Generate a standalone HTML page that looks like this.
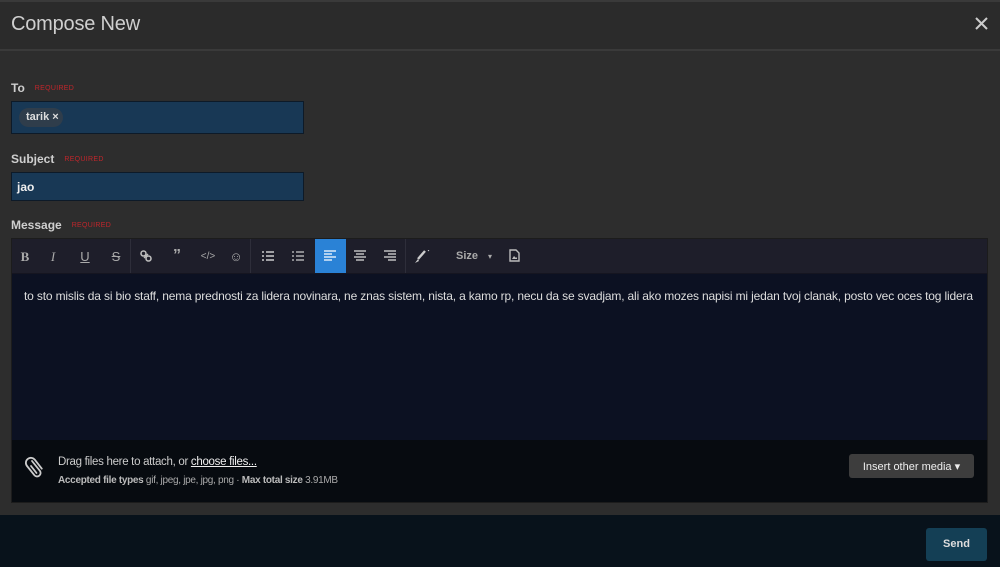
<!DOCTYPE html>
<html><head><meta charset="utf-8"><style>
*{box-sizing:border-box;margin:0;padding:0}
body{width:1000px;height:567px;background:#2d2d2d;font-family:"Liberation Sans",sans-serif;color:#ddd;position:relative;overflow:hidden}
.hdr{position:absolute;left:0;top:0;width:1000px;height:51px;background:#2b2b2b;border-top:2px solid #3a3a3a;border-bottom:2px solid #3a3a3a}
.hdr h1{position:absolute;left:11px;top:11px;font-size:20px;font-weight:normal;color:#cfcfcf;letter-spacing:-.2px}
.x{position:absolute;left:975px;top:15px}
.lbl{position:absolute;left:11px;font-size:12px;font-weight:bold;color:#cfcfcf}
.req{font-size:7px;color:#c0262b;font-weight:normal;margin-left:10px;vertical-align:2px;letter-spacing:.3px}
.inp{position:absolute;left:11px;width:293px;background:#183855;border:1px solid #0d1a28}
.chip{position:absolute;left:7px;top:6px;height:19px;width:44px;border-radius:10px;background:#2f3d4b;font-size:11px;font-weight:bold;color:#ddd;padding:3px 0 0 7px}
.ed{position:absolute;left:11px;top:238px;width:977px;height:265px;border:1px solid #1c1c1c}
.tb{position:absolute;left:0;top:0;width:975px;height:35px;background:#1e1e2a;border-bottom:1px solid #151520}
.tb span{position:absolute;top:10px;font-size:13px;color:#aaa;text-align:center;width:20px}
.tb svg{position:absolute;top:11px}
.sep{position:absolute;top:0;width:1px;height:34px;background:#2e2e3a}
.act{position:absolute;left:303px;top:0;width:31px;height:34px;background:#2a82d6}
.ct{position:absolute;left:0;top:35px;width:975px;height:166px;background:#0c1122}
.msg{position:absolute;left:12px;top:15px;font-size:12px;color:#ddd;white-space:nowrap;letter-spacing:-.16px}
.att{position:absolute;left:0;top:201px;width:975px;height:62px;background:#070b10}
.btn{position:absolute;left:837px;top:14px;width:125px;height:24px;background:#3d3d3d;border-radius:3px;font-size:11px;color:#eee;padding-top:6px;text-align:center}
.ftr{position:absolute;left:0;top:515px;width:1000px;height:52px;background:#08121b}
.send{position:absolute;left:926px;top:528px;width:61px;height:33px;background:#143f55;border-radius:3px;font-size:11px;font-weight:bold;color:#ddd;text-align:center;padding-top:10px}
</style></head><body>
<div class="hdr"><h1>Compose New</h1><svg class="x" width="13" height="13" viewBox="0 0 13 13"><path d="M1 1L12 12M12 1L1 12" stroke="#ccc" stroke-width="2"/></svg></div>
<div class="lbl" style="top:81px">To<span class="req">REQUIRED</span></div>
<div class="inp" style="top:101px;height:33px"><div class="chip">tarik ×</div></div>
<div class="lbl" style="top:152px">Subject<span class="req">REQUIRED</span></div>
<div class="inp" style="top:172px;height:29px"><div style="position:absolute;left:5px;top:7px;font-size:12px;font-weight:bold;color:#eee">jao</div></div>
<div class="lbl" style="top:218px">Message<span class="req">REQUIRED</span></div>
<div class="ed">
<div class="tb">
<div class="act"></div>
<span style="left:3px;font-family:'Liberation Serif';font-weight:bold">B</span>
<span style="left:31px;font-family:'Liberation Serif';font-style:italic">I</span>
<span style="left:63px;text-decoration:underline">U</span>
<span style="left:94px;text-decoration:line-through">S</span>
<div class="sep" style="left:118px"></div>
<svg style="left:128px" width="12" height="12" viewBox="0 0 12 12"><circle cx="3.5" cy="3.5" r="2.5" fill="none" stroke="#bbb" stroke-width="1.6"/><circle cx="8.5" cy="8.5" r="2.5" fill="none" stroke="#bbb" stroke-width="1.6"/><path d="M4 8L8 4" stroke="#bbb" stroke-width="1.4"/></svg>
<span style="left:155px;font-weight:bold;font-size:16px;top:8px">”</span>
<span style="left:186px;font-size:10px;top:12px">&lt;/&gt;</span>
<span style="left:214px">☺</span>
<div class="sep" style="left:238px"></div>
<svg style="left:250px" width="12" height="12" viewBox="0 0 12 12"><path d="M0 2h2M4 2h8M0 6h2M4 6h8M0 10h2M4 10h8" stroke="#ccc" stroke-width="1.6"/></svg>
<svg style="left:280px" width="12" height="12" viewBox="0 0 12 12"><path d="M0 2h2M4 2h8M0 6h2M4 6h8M0 10h2M4 10h8" stroke="#ccc" stroke-width="1.2"/></svg>
<svg style="left:312px" width="12" height="12" viewBox="0 0 12 12"><path d="M0 1h12M0 4h8M0 7h12M0 10h8" stroke="#fff" stroke-width="1.3"/></svg>
<svg style="left:342px" width="12" height="12" viewBox="0 0 12 12"><path d="M0 1h12M2 4h8M0 7h12M2 10h8" stroke="#ddd" stroke-width="1.3"/></svg>
<svg style="left:372px" width="12" height="12" viewBox="0 0 12 12"><path d="M0 1h12M4 4h8M0 7h12M4 10h8" stroke="#ddd" stroke-width="1.3"/></svg>
<div class="sep" style="left:393px"></div>
<svg style="left:402px" width="16" height="14" viewBox="0 0 16 14"><path d="M11 1L4 9" stroke="#ccc" stroke-width="2.4"/><path d="M4 9L1 13L5 11Z" fill="#ccc"/><path d="M14 0l1 1" stroke="#ccc"/></svg>
<span style="left:440px;width:30px;font-size:11px;top:11px;font-weight:bold">Size</span>
<span style="left:468px;font-size:8px;top:13px">▾</span>
<svg style="left:497px;top:10px" width="11" height="13" viewBox="0 0 11 13"><path d="M1 1h6l3 3v8H1z" fill="none" stroke="#bbb" stroke-width="1.4"/><path d="M3 10l2-3 2 2 1-1v2z" fill="#bbb"/></svg>
</div>
<div class="ct"><div class="msg">to sto mislis da si bio staff, nema prednosti za lidera novinara, ne znas sistem, nista, a kamo rp, necu da se svadjam, ali ako mozes napisi mi jedan tvoj clanak, posto vec oces tog lidera</div></div>
<div class="att">
<svg style="position:absolute;left:12px;top:15px" width="22" height="24" viewBox="0 0 22 24"><path d="M8 6l8 10a3.5 3.5 0 0 1-5.5 4.3L3 11a5 5 0 0 1 7.8-6.3l7 9" fill="none" stroke="#ccc" stroke-width="1.8" stroke-linecap="round"/><path d="M7 11l5.5 7" stroke="#ccc" stroke-width="1.8" stroke-linecap="round"/></svg>
<div style="position:absolute;left:46px;top:16px;font-size:11.5px;color:#ccc;letter-spacing:-.3px">Drag files here to attach, or <u style="color:#eee">choose files...</u></div>
<div style="position:absolute;left:46px;top:35px;font-size:10px;color:#aaa;letter-spacing:-.3px"><b style="color:#bbb">Accepted file types</b> gif, jpeg, jpe, jpg, png · <b style="color:#bbb">Max total size</b> 3.91MB</div>
<div class="btn">Insert other media ▾</div>
</div>
</div>
<div class="ftr"></div>
<div class="send">Send</div>
</body></html>
